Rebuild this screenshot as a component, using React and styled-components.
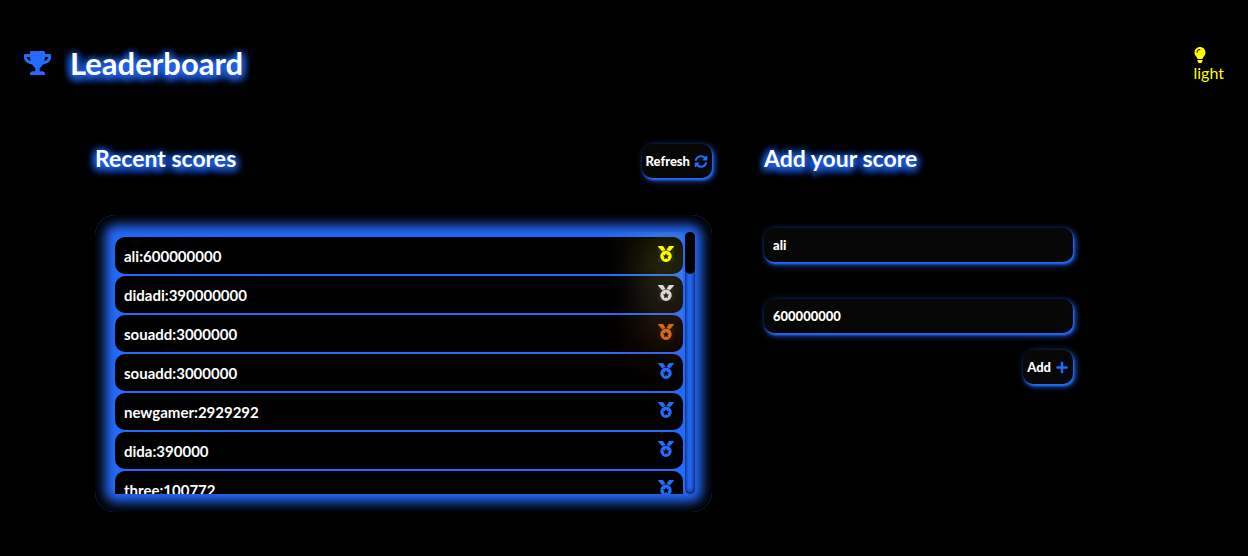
import React from "react";
import styled, { createGlobalStyle } from "styled-components";
import { FaTrophy, FaLightbulb, FaSyncAlt, FaPlus } from "react-icons/fa";

const Global = createGlobalStyle`
  * { box-sizing: border-box; }
  html { background: #000; }
  body {
    margin: 0;
    background: #000;
    color: #fff;
    font-family: Lato, "Liberation Sans", sans-serif;
    font-size: 16px;
  }
  h1, h2 { margin: 0; }
`;

const blue = "#246bfd";
const glow = `0 2px 10px ${blue}`;
const edge = `1px 2px 2px ${blue}, 2px 2px 6px ${blue}`;

const Page = styled.div`
  min-height: 100vh;
`;
const Header = styled.header`
  display: flex;
  align-items: center;
  justify-content: space-between;
  padding: 43px 24px 1px;
`;
const Brand = styled.div`
  display: flex;
  align-items: center;
  gap: 19px;
  color: ${blue};
  font-size: 24px;
  svg { width: 27px; height: 24px; }
`;
const Title = styled.h1`
  color: #fff;
  font-size: 31px;
  line-height: 40px;
  text-shadow: ${glow}, ${glow}, ${glow}, ${glow};
`;
const ThemeButton = styled.button`
  display: flex;
  flex-direction: column;
  align-items: flex-start;
  padding: 4px 0 0;
  border: 0;
  background: none;
  color: #ff0;
  font: inherit;
  line-height: 20px;
  svg { width: 12px; height: 16px; }
`;
const Main = styled.main`
  display: grid;
  grid-template-columns: 617fr 310fr;
  gap: 52px;
  padding: 60px 174px 44px 95px;
`;
const SectionHead = styled.div`
  display: flex;
  align-items: flex-start;
  justify-content: space-between;
`;
const SectionTitle = styled.h2`
  font-size: 23px;
  line-height: 28px;
  text-shadow: ${glow}, ${glow}, ${glow}, ${glow};
`;
const Button = styled.button`
  display: flex;
  align-items: center;
  justify-content: center;
  gap: 4px;
  height: 34px;
  padding: 0 4px;
  border: 0;
  border-radius: 10px;
  background: #070707;
  box-shadow: ${edge};
  color: #fff;
  font: 900 13px Lato, sans-serif;
  svg { color: ${blue}; width: 14px; height: 13px; }
`;
const Panel = styled.div`
  display: flex;
  gap: 2px;
  height: 297px;
  margin-top: 37px;
  padding: 17px 17px 18px 20px;
  border-radius: 20px;
  background: ${blue};
  box-shadow: inset 0 0 12px 10px #000;
`;
const Scores = styled.ul`
  flex: 1;
  display: flex;
  flex-direction: column;
  gap: 2px;
  margin: 0;
  padding: 5px 0 0;
  list-style: none;
  overflow: auto;
  scrollbar-width: none;
`;
const Score = styled.li`
  flex: none;
  display: flex;
  align-items: center;
  justify-content: space-between;
  height: 37px;
  padding: 0 9px;
  border-radius: 10px;
  background: #000;
  font-size: 15px;
  font-weight: 700;
  line-height: 20px;
`;
const Medal = styled.span`
  position: relative;
  display: flex;
  margin-bottom: 4px;
  color: ${(p) => p.$color};
  background: ${(p) => p.$glow || "none"};
  box-shadow: ${(p) => (p.$glow ? `0 0 40px 20px ${p.$glow}` : "none")};
  svg { width: 16px; height: 16px; }
`;
const Track = styled.div`
  width: 10px;
  border-radius: 10px;
  box-shadow: inset 0 0 5px #000;
`;
const Thumb = styled.div`
  height: 42px;
  border-radius: 10px;
  background: #000;
`;
const Form = styled.form`
  display: flex;
  flex-direction: column;
  align-items: flex-end;
  margin-top: 56px;
  padding-right: 1px;
`;
const Field = styled.input`
  width: 100%;
  height: 34px;
  padding: 0 9px;
  border: 0;
  border-radius: 10px;
  background: #070707;
  box-shadow: ${edge};
  color: #fff;
  font: 900 13px Lato, sans-serif;
  outline: 0;
  margin-bottom: ${(p) => p.$gap};
`;

const MedalIcon = () => (
  <svg viewBox="0 0 16 16" fill="currentColor" aria-hidden="true">
    <path d="M0.4 0H4.6Q5.1 0 5.4 0.5L7.5 4.1Q5.7 4.4 4.3 5.6L0.1 0.7Q-0.1 0.1 0.4 0ZM15.6 0H11.4Q10.9 0 10.6 0.5L8.5 4.1Q10.3 4.4 11.7 5.6L15.9 0.7Q16.1 0.1 15.6 0Z" />
    <path
      fillRule="evenodd"
      d="M8 4.6A5.7 5.7 0 1 1 8 16A5.7 5.7 0 1 1 8 4.6ZM8 7.2L7 9.2L4.8 9.5L6.4 11.1L6 13.3L8 12.3L10 13.3L9.6 11.1L11.2 9.5L9 9.2Z"
    />
  </svg>
);

const scores = [
  ["ali", 600000000, "#ffff00", "#ffff0026"],
  ["didadi", 390000000, "#dcdcdc", "#dcdcdc1e"],
  ["souadd", 3000000, "#d2691e", "#d2691e24"],
  ["souadd", 3000000],
  ["newgamer", 2929292],
  ["dida", 390000],
  ["three", 100772],
];

export default function App() {
  return (
    <Page>
      <Global />
      <Header>
        <Brand>
          <FaTrophy />
          <Title>Leaderboard</Title>
        </Brand>
        <ThemeButton type="button">
          <FaLightbulb />
          light
        </ThemeButton>
      </Header>
      <Main>
        <section>
          <SectionHead>
            <SectionTitle>Recent scores</SectionTitle>
            <Button type="button">
              Refresh <FaSyncAlt />
            </Button>
          </SectionHead>
          <Panel>
            <Scores>
              {scores.map(([name, score, color = blue, halo], i) => (
                <Score key={i}>
                  {name}:{score}
                  <Medal $color={color} $glow={halo}>
                    <MedalIcon />
                  </Medal>
                </Score>
              ))}
            </Scores>
            <Track>
              <Thumb />
            </Track>
          </Panel>
        </section>
        <section>
          <SectionTitle>Add your score</SectionTitle>
          <Form onSubmit={(e) => e.preventDefault()}>
            <Field aria-label="Your name" defaultValue="ali" $gap="37px" />
            <Field aria-label="Your score" defaultValue="600000000" $gap="17px" />
            <Button type="submit">
              Add <FaPlus />
            </Button>
          </Form>
        </section>
      </Main>
    </Page>
  );
}
